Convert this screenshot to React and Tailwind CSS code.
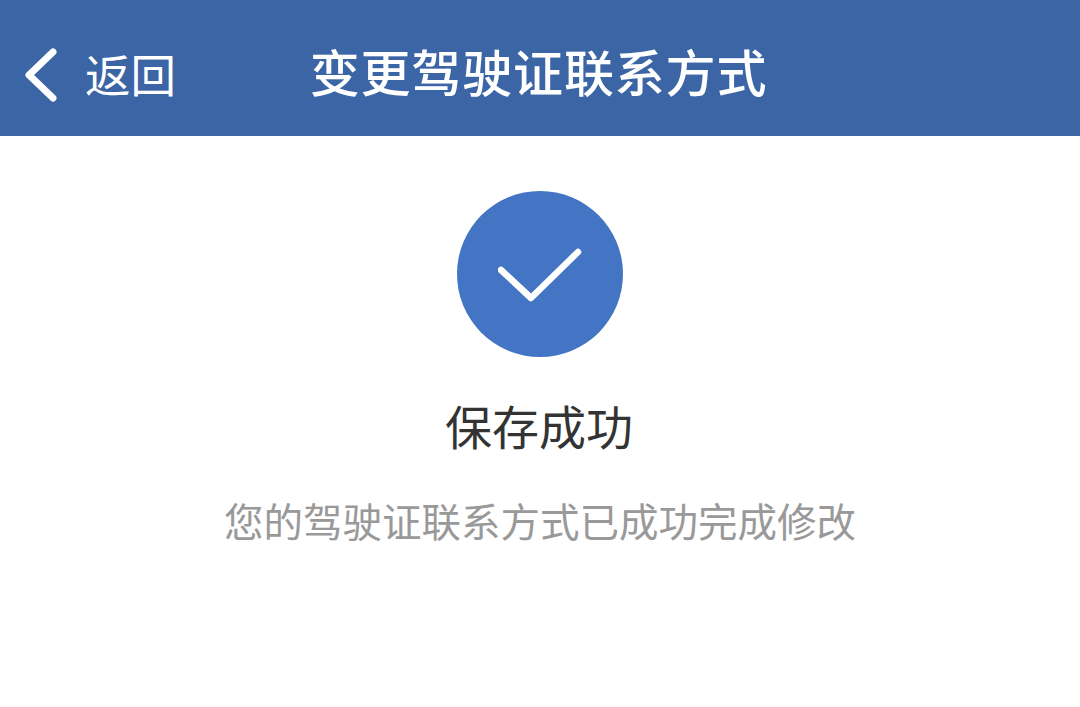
export default function App() {
  return (
    <div className="w-[1080px] h-[707px] bg-white overflow-hidden font-['Noto_Sans_CJK_SC',sans-serif]">
      {/* Header */}
      <div className="relative h-[136px] bg-[#3b65a5] flex items-center justify-center text-white">
        <button type="button" className="absolute left-[24px] top-[47px] flex items-center">
          <svg width="34" height="56" viewBox="0 0 34 56" fill="none" stroke="white" strokeWidth="7" strokeLinecap="round" strokeLinejoin="round">
            <path d="M29 5 L5 28 L29 51" />
          </svg>
          <span className="ml-[27px] text-[45.5px] leading-none font-normal -translate-y-[1px]">返回</span>
        </button>
        <h1 className="text-[50px] leading-none font-medium tracking-[0.85px] -translate-x-[1.5px] translate-y-[2px]">变更驾驶证联系方式</h1>
      </div>

      {/* Result */}
      <div className="flex flex-col items-center pt-[55px]">
        <div className="w-[166px] h-[166px] rounded-full bg-[#4475c4] flex items-center justify-center">
          <svg width="84" height="56" viewBox="0 0 84 56" fill="none" stroke="white" strokeWidth="6.5" strokeLinecap="round" strokeLinejoin="round">
            <path d="M3 24 L33 52 L80 6" />
          </svg>
        </div>
        <p className="mt-[44px] text-[47px] leading-none text-[#333333] -translate-x-[1px]">保存成功</p>
        <p className="mt-[52px] text-[39.5px] leading-none text-[#999999]">您的驾驶证联系方式已成功完成修改</p>
      </div>
    </div>
  );
}
